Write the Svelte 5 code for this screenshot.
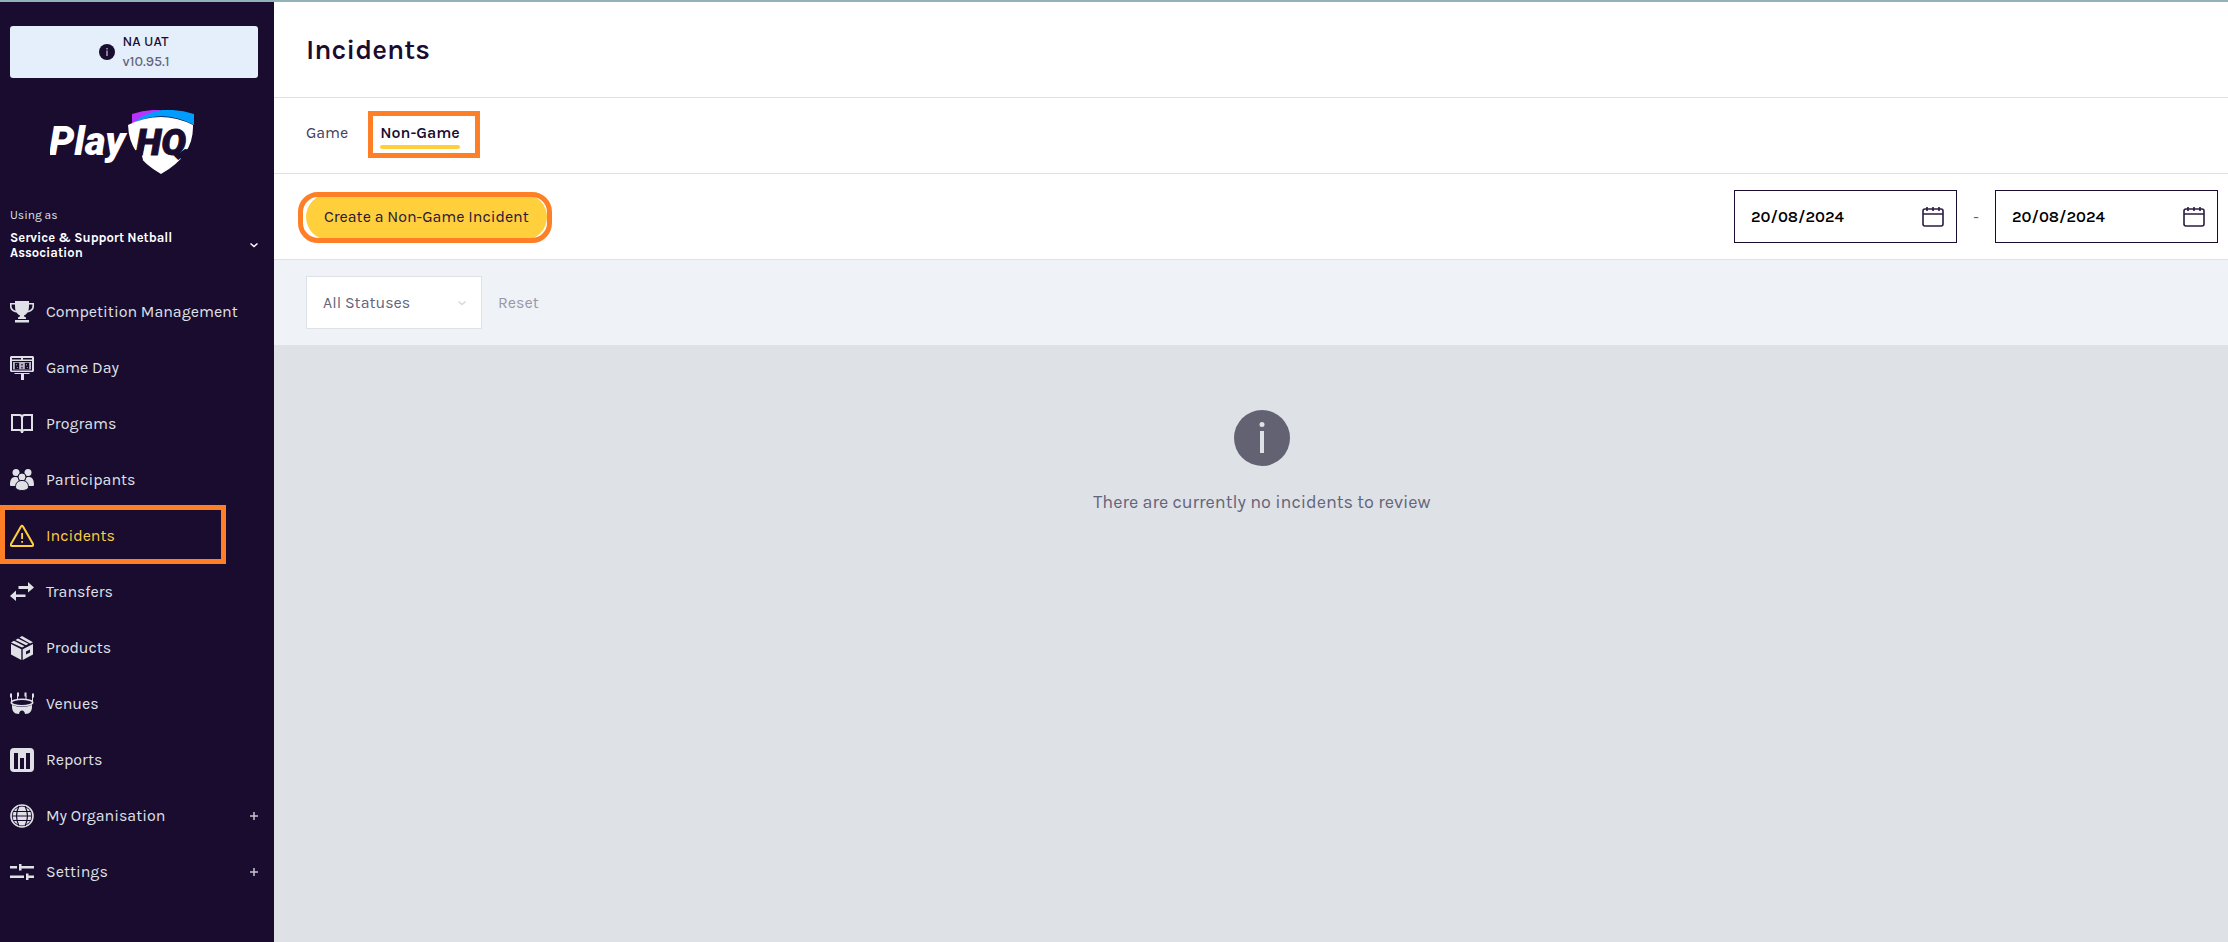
<script>
  let active = 'Incidents';
  let tab = 'Non-Game';
  let status = 'All Statuses';
  let from = '20/08/2024';
  let to = '20/08/2024';

  const nav = [
    { label: 'Competition Management', icon: '<path d="M5 1h14v2h5v3c0 4-3 6-6.500 6.500C16.500 14 15 15 14 15.500c0 1 .6 1.500 2 1.900V19H8v-1.600c1.400-.4 2-.9 2-1.900-1-.5-2.500-1.500-3.500-3C3 12 0 10 0 6V3h5zM5 4.500H1.600V6c0 2.500 1.700 4 4 4.700C5.100 9 5 7 5 4.500zm14 0c0 2.500-.1 4.500-.6 6.200 2.300-.7 4-2.200 4-4.700V4.500zM5 20h14v2.500H5z"/>' },
    { label: 'Game Day', icon: '<path fill-rule="evenodd" d="M1 0h22l1 1v14l-1 1H1l-1-1V1zM2 2v1.500h9V2zm11 0v1.500h9V2zM2 5v9.500h20V5z"/><path fill-rule="evenodd" opacity=".8" d="M3 6h18v7.500H3z"/><path fill="none" stroke="#190c2f" stroke-width="1.300" d="M5.500 7.500h3v5h-3zM5.500 12l3-4M15.500 7.500h3v5h-3zM15.500 12l3-4M12 8v1.500M12 11v1.500"/><path d="M4.500 17h15v1H14v6h-3v-6H4.500z"/>' },
    { label: 'Programs', icon: '<path fill="none" stroke="currentColor" stroke-width="2" d="M2 3h7.500Q12 3 12 6q0-3 2.500-3H22v15h-7.500q-2.500 0-2.500 3 0-3-2.500-3H2zM12 5v16"/>' },
    { label: 'Participants', icon: '<circle cx="6" cy="4.500" r="3.500"/><circle cx="18" cy="4.500" r="3.500"/><path d="M0 17c0-5 1.500-8 5-8 2 0 3 .5 4 1.500L8 18H2c-1.500 0-2-.3-2-1zM24 17c0-5-1.500-8-5-8-2 0-3 .5-4 1.500l1 7.500h6c1.500 0 2-.3 2-1z"/><g stroke="#190c2f"><circle cx="12" cy="9" r="4"/><path d="M5.500 19c0-4 2.500-6.500 6.500-6.500s6.500 2.500 6.500 6.500c0 2-3 3.500-6.500 3.500S5.500 21 5.500 19z"/></g>' },
    { label: 'Incidents', icon: '<path fill="none" stroke="currentColor" stroke-width="2" stroke-linejoin="round" d="M11 2.500q1-1.500 2 0l10 17.500q.6 2-1 2H2q-1.600 0-1-2z"/><path d="M11.200 9h1.800v6h-1.800zM11.200 17h1.800v1.800h-1.800z"/>' },
    { label: 'Transfers', icon: '<path d="M8.500 6H18V2l6 5.500-6 5V9H8.500zM15.500 14.500H6v-4l-6 5.500 6 5v-4h9.500z"/>' },
    { label: 'Products', icon: '<path d="M1 6.500l3-1.800 10.500 5.500L12 11.500zM5.500 4L8 2.500l10.500 5.300-2.500 1.500zM9.500 1.600L12 0l11 6.300-3 1.300zM1 8l10.300 5.200V24L1 18.500z"/><path fill-rule="evenodd" d="M23 8v10.500L12.700 24V13.200zM16 15.500v3l4-2v-3z"/>' },
    { label: 'Venues', icon: '<path d="M0 1.500h2v4H0zM7 .5h2v4H7zM14.500.5h2v4h-2zM22 1.500h2v4h-2z"/><path fill="none" stroke="currentColor" d="M1.500 5v5M7.500 4v4M16 4v4M22.500 5v5"/><ellipse cx="12" cy="10.500" rx="10.700" ry="3.300" fill="none" stroke="currentColor" stroke-width="1.600"/><path d="M2 13q10 4 20 0v2.500q-.5 4.500-3.500 6l-3.500.5q-.5-3.500-3-3.500T9 22l-3.500-.5Q2.500 20 2 15.500z"/>' },
    { label: 'Reports', icon: '<path fill-rule="evenodd" d="M4 0h16q4 0 4 4v16q0 4-4 4H4q-4 0-4-4V4q0-4 4-4zm0 5v16h4V5zm6 5v11h4V10zm6-5v16h4V5z"/>' },
    { label: 'My Organisation', more: true, icon: '<circle cx="12" cy="12" r="11" fill="none" stroke="currentColor" stroke-width="1.600"/><circle cx="12" cy="12" r="9.400"/><path fill="none" stroke="#190c2f" stroke-width="1.200" d="M3 7.500h18M2 12h20M3 16.500h18M9 2q-5 10 0 20M15 2q5 10 0 20"/>' },
    { label: 'Settings', more: true, icon: '<path d="M0 6h7v2.500H0zM9 4h2.500v2H24v2.500H11.500v2H9zM0 15.500h14V18H0zM16 13.500h2.500v2H24V18h-5.500v2H16z"/>' },
  ];
</script>

<div class="app">
  <aside class="sidebar">
    <div class="env">
      <svg width="16" height="16" viewBox="0 0 16 16" aria-hidden="true">
        <circle cx="8" cy="8" r="8" fill="#190c2f" />
        <path d="M7.500 4h1v1.500h-1zM7.500 6.500h1V12h-1z" fill="#e5effc" />
      </svg>
      <div class="env-text">
        <div>NA UAT</div>
        <div class="version">v10.95.1</div>
      </div>
    </div>

    <a class="logo" href="#home" aria-label="PlayHQ">
      <svg width="146" height="66" viewBox="0 0 146 66">
        <path d="M82 4Q98-1 112 0Q96 4 82 15z" fill="#b833ff" />
        <path d="M82 14Q96 2 112 0Q128-1 144 4V15Q112-2 82 14z" fill="#009dff" />
        <path d="M78 15Q111-1 143 15Q144 46 111 64Q79 46 78 15z" fill="#fff" />
        <path d="M80 41L87 40L90 33H95L92 46L93 50L84 50zM128 44L135 39L142 40L138 46L132 50z" fill="#190c2f" />
        <text class="play" x="-1" y="45">Play</text>
        <text class="hq" x="86" y="45">HQ</text>
      </svg>
    </a>

    <button class="org">
      <span class="using">Using as</span>
      <span class="org-row">
        <span class="org-name">Service &amp; Support Netball Association</span>
        <svg width="8" height="8" viewBox="0 0 8 8" aria-hidden="true">
          <path d="M0.500 2.500L4 5.500L7.500 2.500" fill="none" stroke="#fff" stroke-width="1.500" />
        </svg>
      </span>
    </button>

    <nav>
      {#each nav as item}
        <a
          href="#{item.label}"
          class:active={active === item.label}
          on:click|preventDefault={() => (active = item.label)}
        >
          <svg class="nav-icon" width="24" height="24" viewBox="0 0 24 24" fill="currentColor" aria-hidden="true">{@html item.icon}</svg>
          <span>{item.label}</span>
          {#if item.more}
            <svg class="plus" width="8" height="8" viewBox="0 0 8 8" aria-hidden="true">
              <path d="M0 4h8M4 0v8" stroke="#c6c3cf" stroke-width="1.500" />
            </svg>
          {/if}
        </a>
      {/each}
    </nav>
  </aside>

  <main>
    <header>
      <h1>Incidents</h1>
    </header>

    <div class="tabs" role="tablist">
      {#each ['Game', 'Non-Game'] as name}
        <button role="tab" aria-selected={tab === name} class:active={tab === name} on:click={() => (tab = name)}>
          {name}
        </button>
      {/each}
    </div>

    <div class="actions">
      <button class="create">Create a Non-Game Incident</button>
      <div class="dates">
        <label class="date">
          <input type="text" aria-label="From date" bind:value={from} />
          <svg width="22" height="22" viewBox="0 0 22 22" aria-hidden="true">
            <path d="M3 3h16q2 0 2 2v13q0 2-2 2H3q-2 0-2-2V5q0-2 2-2zM1 8h20M5 1v4M11 1v4M17 1v4" fill="none" stroke="#2b1b42" stroke-width="1.600" />
          </svg>
        </label>
        <span class="dash">-</span>
        <label class="date">
          <input type="text" aria-label="To date" bind:value={to} />
          <svg width="22" height="22" viewBox="0 0 22 22" aria-hidden="true">
            <path d="M3 3h16q2 0 2 2v13q0 2-2 2H3q-2 0-2-2V5q0-2 2-2zM1 8h20M5 1v4M11 1v4M17 1v4" fill="none" stroke="#2b1b42" stroke-width="1.600" />
          </svg>
        </label>
      </div>
    </div>

    <div class="filters">
      <div class="select">
        <select aria-label="Status" bind:value={status}>
          <option>All Statuses</option>
          <option>Open</option>
          <option>Closed</option>
        </select>
        <svg width="8" height="8" viewBox="0 0 8 8" aria-hidden="true">
          <path d="M0.500 2.500L4 5.500L7.500 2.500" fill="none" stroke="#d5d8de" stroke-width="1.500" />
        </svg>
      </div>
      <button class="reset">Reset</button>
    </div>

    <section class="empty">
      <svg width="56" height="56" viewBox="0 0 56 56" aria-hidden="true">
        <circle cx="28" cy="28" r="28" fill="#626272" />
        <circle cx="28" cy="14.500" r="2.500" fill="#dee1e6" />
        <path d="M26 21h4v22h-4z" fill="#dee1e6" />
      </svg>
      <p>There are currently no incidents to review</p>
    </section>
  </main>
</div>

<style>
  :global(body) { margin: 0; }
  .app {
    display: flex;
    min-height: 100vh;
    box-sizing: border-box;
    border-top: 2px solid #92b2b7;
    background: #dee1e6;
    color: #190c2f;
    font-family: Karla, Inter, "Liberation Sans", sans-serif;
    font-size: 16px;
    line-height: 20px;
  }
  button, input, select { font: inherit; color: inherit; }
  button { background: none; border: 0; padding: 0; cursor: pointer; }
  a { color: inherit; text-decoration: none; }
  svg { display: block; flex: none; }

  .sidebar {
    flex: none;
    width: 274px;
    box-sizing: border-box;
    padding-top: 24px;
    background: #190c2f;
    color: #dfe1e7;
  }
  .env {
    display: flex;
    align-items: center;
    justify-content: center;
    gap: 8px;
    height: 52px;
    margin: 0 16px 0 10px;
    border-radius: 3px;
    background: #e5effc;
    color: #190c2f;
    font-size: 14px;
    font-weight: 500;
  }
  .version { color: #64647a; }
  .logo { display: block; margin: 32px 0 0 50px; }
  .play, .hq {
    font-family: Roboto, sans-serif;
    font-style: italic;
    font-weight: 900;
  }
  .play { font-size: 40px; fill: #fff; }
  .hq { font-size: 37px; fill: #190c2f; stroke: #190c2f; stroke-width: 1; }

  .org {
    display: block;
    width: 100%;
    margin-top: 31px;
    padding: 0 16px 0 10px;
    text-align: left;
  }
  .using { display: block; font-size: 12px; line-height: 16px; color: #dfe1e7; }
  .org-row {
    display: flex;
    align-items: center;
    justify-content: space-between;
    margin-top: 7px;
    color: #fff;
    font-size: 13px;
    font-weight: 700;
    line-height: 15px;
  }
  .org-name { width: 190px; }

  nav { margin-top: 24px; }
  nav a {
    position: relative;
    display: flex;
    align-items: center;
    gap: 12px;
    height: 56px;
    padding: 0 16px 0 10px;
  }
  .plus { margin-left: auto; }
  nav .active { color: #ffcf3c; }
  nav .active::after {
    content: '';
    position: absolute;
    inset: -3px 48px 0 0;
    border: 5px solid #ff7f27;
  }

  main { flex: 1; min-width: 0; }
  header, .tabs, .actions, .filters {
    display: flex;
    align-items: center;
    box-sizing: border-box;
    padding: 0 10px 0 32px;
    background: #fff;
    border-bottom: 1px solid #dee1e6;
  }
  header { height: 96px; }
  h1 { margin: 0; font-size: 28px; line-height: 32px; font-weight: 600; }

  .tabs { height: 76px; gap: 32px; padding-bottom: 5px; }
  .tabs button { position: relative; padding: 6px 0; color: #45405c; }
  .tabs .active { color: #190c2f; font-weight: 600; }
  .tabs .active::before {
    content: '';
    position: absolute;
    inset: auto 0 0;
    height: 4px;
    border-radius: 2px;
    background: #ffcf3c;
  }
  .tabs .active::after {
    content: '';
    position: absolute;
    inset: -6px -20px -9px -12px;
    border: 5px solid #ff7f27;
  }

  .actions { height: 86px; justify-content: space-between; }
  .create {
    position: relative;
    height: 46px;
    padding: 0 18px;
    border-radius: 23px;
    background: #ffcf3c;
    color: #29163a;
  }
  .create::after {
    content: '';
    position: absolute;
    inset: -2px -5px -3px -8px;
    border: 5px solid #ff7f27;
    border-radius: 20px;
  }
  .dates { display: flex; align-items: center; }
  .dash { width: 38px; text-align: center; color: #64647a; }
  .date {
    display: flex;
    align-items: center;
    box-sizing: border-box;
    width: 223px;
    height: 53px;
    padding: 0 12px 0 16px;
    border: 1px solid #190c2f;
  }
  .date input {
    flex: 1;
    min-width: 0;
    padding: 0;
    border: 0;
    outline: 0;
    color: #000;
    font-weight: 600;
  }

  .filters { height: 86px; gap: 16px; background: #eff2f7; color: #64647a; }
  .select { position: relative; width: 176px; }
  .select select {
    appearance: none;
    width: 100%;
    height: 53px;
    padding: 0 32px 0 16px;
    border: 1px solid #dee1e6;
    border-radius: 0;
    background: #fff;
  }
  .select svg { position: absolute; right: 16px; top: 23px; }
  .reset { color: #9a97a8; }

  .empty {
    display: flex;
    flex-direction: column;
    align-items: center;
    padding: 64px 10px 32px 32px;
    color: #64647a;
  }
  .empty p { margin: 24px 0 0; font-size: 18px; line-height: 24px; }
</style>
